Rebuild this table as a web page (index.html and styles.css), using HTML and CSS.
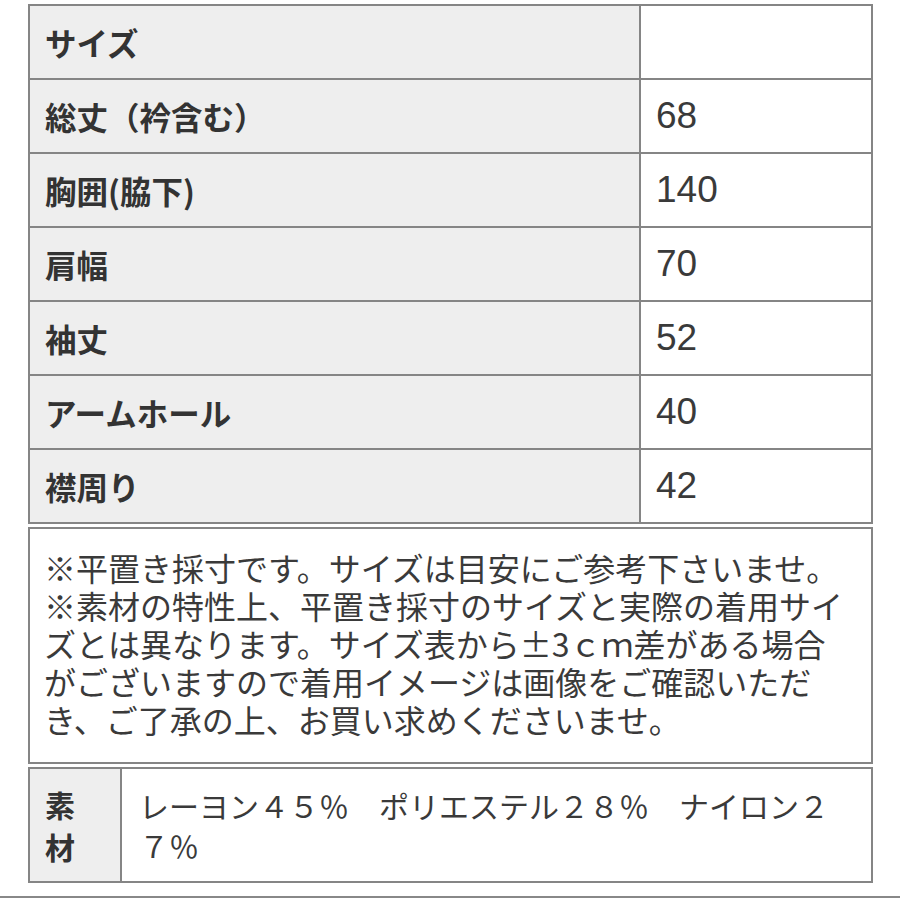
FILE: index.html
```html
<!DOCTYPE html>
<html lang="ja">
<head>
<meta charset="utf-8">
<title>サイズ表</title>
<link rel="stylesheet" href="styles.css">
</head>
<body>
<div class="page">
  <table class="size-table">
    <tr><th class="label">サイズ</th><td class="value"></td></tr>
    <tr><th class="label">総丈（衿含む）</th><td class="value">68</td></tr>
    <tr><th class="label">胸囲(脇下)</th><td class="value">140</td></tr>
    <tr><th class="label">肩幅</th><td class="value">70</td></tr>
    <tr><th class="label">袖丈</th><td class="value">52</td></tr>
    <tr><th class="label">アームホール</th><td class="value">40</td></tr>
    <tr><th class="label">襟周り</th><td class="value">42</td></tr>
  </table>
  <div class="note">
    ※平置き採寸です。サイズは目安にご参考下さいませ。<br>
    ※素材の特性上、平置き採寸のサイズと実際の着用サイ<br>
    ズとは異なります。サイズ表から±3ｃｍ差がある場合<br>
    がございますので着用イメージは画像をご確認いただ<br>
    き、ご了承の上、お買い求めくださいませ。
  </div>
  <table class="material-table">
    <tr>
      <th class="mat-label">素<br>材</th>
      <td class="mat-value">レーヨン４５％　ポリエステル２８％　ナイロン２<br>７％</td>
    </tr>
  </table>
</div>
<div class="bottom-rule"></div>
</body>
</html>
```

FILE: styles.css
```css
html, body {
  margin: 0;
  padding: 0;
  background: #ffffff;
}

body {
  width: 900px;
  height: 900px;
  overflow: hidden;
  font-family: "Noto Sans CJK JP", "Noto Sans", sans-serif;
  color: #333333;
}

.page {
  padding: 4px 0 0 28px;
  width: 845px;
}

.size-table {
  width: 845px;
  border-collapse: collapse;
  border: 2px solid #858585;
}

.size-table th,
.size-table td {
  border: 2px solid #858585;
  height: 72px;
  padding: 0;
  vertical-align: middle;
}

.label {
  width: 594px;
  background: #eeeeee;
  text-align: left;
  font-weight: bold;
  font-size: 31.5px;
  line-height: 36px;
  padding-left: 15px !important;
  color: #333333;
}

.value {
  background: #ffffff;
  font-family: "Liberation Sans", "Noto Sans CJK JP", sans-serif;
  font-size: 37px;
  padding-left: 15px !important;
  color: #3a3a3a;
}

.note {
  margin-top: 3px;
  border: 2px solid #858585;
  padding: 19px 6px 24px 14px;
  font-size: 32px;
  line-height: 38px;
  color: #3a3a3a;
  white-space: nowrap;
}

.material-table {
  margin-top: 3px;
  width: 845px;
  border-collapse: collapse;
  border: 2px solid #858585;
}

.material-table th,
.material-table td {
  border: 2px solid #858585;
  padding: 0;
  vertical-align: middle;
}

.mat-label {
  width: 75px;
  background: #eeeeee;
  text-align: left;
  font-weight: bold;
  font-size: 30px;
  line-height: 42px;
  padding: 14px 0 14px 15px !important;
  color: #333333;
}

.mat-value {
  font-size: 30px;
  line-height: 40px;
  padding: 16px 0 16px 17px !important;
  color: #3a3a3a;
  white-space: nowrap;
}

.bottom-rule {
  margin-top: 13px;
  height: 2px;
  background: #888888;
  width: 900px;
}
```
